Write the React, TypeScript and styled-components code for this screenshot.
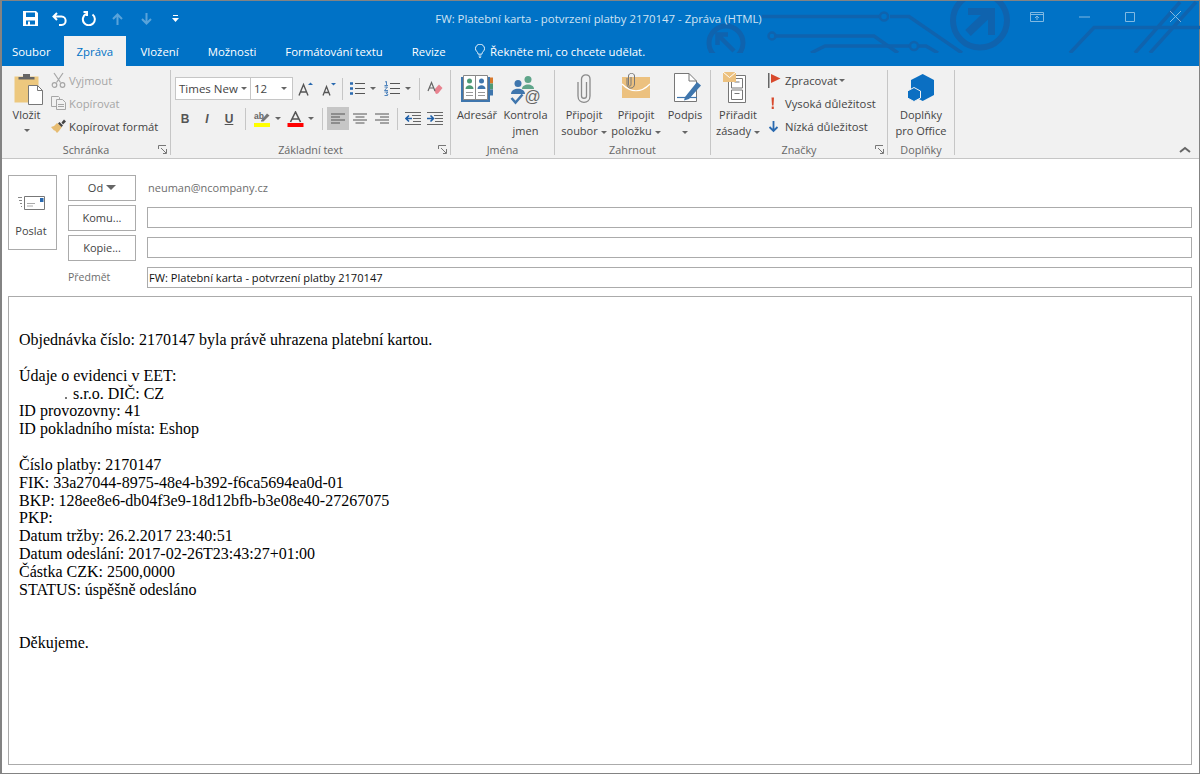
import styled, { createGlobalStyle } from "styled-components";
import { ReactNode } from "react";

const GlobalStyle = createGlobalStyle`
  html, body {
    margin: 0;
    padding: 0;
    background: #fff;
    overflow: hidden;
  }
  * { box-sizing: border-box; }
`;

const uiFont = `"Open Sans", "Noto Sans", sans-serif`;

const Window = styled.div`
  width: 1200px;
  height: 774px;
  display: flex;
  flex-direction: column;
  border: 1px solid #838383;
  border-left-width: 2px;
  background: #fff;
  font-family: ${uiFont};
  font-size: 11px;
  color: #444;
`;

const Header = styled.header`
  position: relative;
  background: #0072c6;
  height: 65px;
  flex: none;
  color: #fff;
`;

const Art = styled.svg`
  position: absolute;
  left: 0;
  top: 0;
  pointer-events: none;
`;

const TitleRow = styled.div`
  position: relative;
  height: 35px;
  display: grid;
  grid-template-columns: 1fr auto 1fr;
  align-items: center;
`;

const Qat = styled.div`
  display: flex;
  align-items: center;
  gap: 11px;
  padding-left: 19px;
`;

const QatBtn = styled.span<{ $dim?: boolean }>`
  display: flex;
  width: 18px;
  height: 18px;
  align-items: center;
  justify-content: center;
  opacity: ${(p) => (p.$dim ? 0.35 : 1)};
`;

const Title = styled.div`
  font-size: 11.4px;
  color: #cfe3f3;
  padding-right: 4px;
`;

const WinControls = styled.div`
  display: flex;
  justify-content: flex-end;
  align-items: center;
  gap: 35px;
  padding: 0 18px 4px 0;
  opacity: 0.5;
`;

const Tabs = styled.nav`
  position: relative;
  display: flex;
  height: 30px;
  align-items: stretch;
`;

const Tab = styled.div<{ $active?: boolean }>`
  display: flex;
  align-items: center;
  padding: 0 ${(p) => (p.$active ? "13px" : "14.5px")};
  font-size: 11.4px;
  background: ${(p) => (p.$active ? "#f1f1f1" : "transparent")};
  color: ${(p) => (p.$active ? "#0072c6" : "#fff")};
  &:first-child {
    padding: 0 13px 0 10px;
  }
`;

const TellMe = styled.div`
  display: flex;
  align-items: center;
  gap: 5px;
  padding-left: 15px;
  font-size: 11.4px;
`;

const Ribbon = styled.section`
  position: relative;
  display: flex;
  flex: none;
  height: 93px;
  background: #f1f1f1;
  border-bottom: 1px solid #c6c6c6;
  padding: 4px 0 3px;
`;

const Group = styled.div<{ $w: number }>`
  position: relative;
  width: ${(p) => p.$w}px;
  flex: none;
  display: flex;
  flex-direction: column;
  border-right: 1px solid #c6c6c6;
`;

const GroupBody = styled.div`
  flex: 1;
  display: flex;
  min-height: 0;
`;

const GroupLabel = styled.div`
  height: 12px;
  line-height: 14px;
  text-align: center;
  font-size: 10.8px;
  color: #666;
`;

const Launcher = styled.svg`
  position: absolute;
  right: 3px;
  bottom: 1px;
`;

const BigButton = styled.div<{ $w: number }>`
  width: ${(p) => p.$w}px;
  flex: none;
  display: flex;
  flex-direction: column;
  align-items: center;
  font-size: 11px;
  line-height: 16px;
  text-align: center;
  color: #444;
  white-space: nowrap;
`;

const BigIcon = styled.div`
  height: 36px;
  margin-bottom: 1px;
  display: flex;
  align-items: flex-end;
  justify-content: center;
`;

const SmallCol = styled.div<{ $pl?: number; $gap?: number }>`
  display: flex;
  flex-direction: column;
  gap: 3px;
  padding-left: ${(p) => p.$pl ?? 0}px;
  & > div {
    gap: ${(p) => p.$gap ?? 3}px;
  }
`;

const SmallBtn = styled.div<{ $off?: boolean }>`
  display: flex;
  align-items: center;
  height: 20px;
  font-size: 11.25px;
  white-space: nowrap;
  color: ${(p) => (p.$off ? "#a6a6a6" : "#444")};
`;

const Caret = styled.span<{ $ml?: number; $big?: boolean; $block?: boolean }>`
  display: ${(p) => (p.$block ? "block" : "inline-block")};
  flex: none;
  width: 0;
  height: 0;
  margin-left: ${(p) => p.$ml ?? 3}px;
  margin-top: ${(p) => (p.$block ? "6px" : "0")};
  vertical-align: middle;
  border-left: ${(p) => (p.$big ? 5.5 : 3)}px solid transparent;
  border-right: ${(p) => (p.$big ? 5.5 : 3)}px solid transparent;
  border-top: ${(p) => (p.$big ? 5 : 3)}px solid #666;
`;

const FontRows = styled.div`
  display: flex;
  flex-direction: column;
  gap: 7px;
  padding: 7px 0 0 4px;
`;

const FontRow = styled.div<{ $ml?: number }>`
  display: flex;
  align-items: center;
  height: 23px;
  margin-left: ${(p) => p.$ml ?? 0}px;
`;

const Combo = styled.div<{ $w: number }>`
  width: ${(p) => p.$w}px;
  height: 23px;
  display: flex;
  align-items: center;
  justify-content: space-between;
  padding: 0 5px 0 3px;
  background: #fff;
  border: 1px solid #c6c6c6;
  margin-right: -1px;
  font-size: 11.5px;
  overflow: hidden;
  white-space: nowrap;
`;

const FmtBtn = styled.div<{ $w?: number; $on?: boolean; $ml?: number }>`
  width: ${(p) => p.$w ?? 22}px;
  height: 23px;
  flex: none;
  margin-left: ${(p) => p.$ml ?? 0}px;
  display: flex;
  align-items: center;
  justify-content: center;
  background: ${(p) => (p.$on ? "#c6c6c6" : "transparent")};
`;

const FmtLetter = styled.span<{ $i?: boolean; $u?: boolean }>`
  font-family: "Liberation Sans", sans-serif;
  font-size: 12px;
  font-weight: 700;
  font-style: ${(p) => (p.$i ? "italic" : "normal")};
  text-decoration: ${(p) => (p.$u ? "underline" : "none")};
  color: #555;
`;

const VSep = styled.span<{ $l?: number }>`
  width: 1px;
  height: 22px;
  flex: none;
  margin: 0 4px 0 ${(p) => p.$l ?? 4}px;
  background: #c6c6c6;
`;

const Collapse = styled.svg`
  position: absolute;
  right: 8px;
  bottom: 5px;
`;

const Compose = styled.main`
  flex: 1;
  min-height: 0;
  display: flex;
  flex-direction: column;
  padding: 16px 7px 8px 6px;
`;

const Fields = styled.div`
  display: flex;
  align-items: stretch;
`;

const SendButton = styled.div`
  width: 49px;
  height: 75px;
  flex: none;
  display: flex;
  flex-direction: column;
  align-items: center;
  gap: 12px;
  padding: 20px 3px 0 0;
  margin-right: 11px;
  border: 1px solid #ababab;
  font-size: 11px;
  color: #444;
`;

const FieldRows = styled.div`
  flex: 1;
  display: grid;
  grid-template-columns: 68px 1fr;
  grid-auto-rows: 26px;
  column-gap: 11px;
  row-gap: 4px;
`;

const FieldBtn = styled.div`
  display: flex;
  align-items: center;
  justify-content: center;
  padding-bottom: 2px;
  border: 1px solid #ababab;
  font-size: 11px;
  color: #444;
`;

const SenderText = styled.div`
  display: flex;
  align-items: center;
  padding: 0 0 2px 1px;
  font-size: 11px;
  color: #6d6d6d;
`;

const FieldInput = styled.div`
  align-self: start;
  margin-top: 2px;
  height: 21px;
  display: flex;
  align-items: center;
  padding: 0 0 1px 1px;
  border: 1px solid #ababab;
  font-size: 11.1px;
  color: #111;
`;

const SubjectLabel = styled.div`
  display: flex;
  align-items: center;
  padding-bottom: 3px;
  font-size: 10.5px;
  color: #6d6d6d;
`;

const Body = styled.div`
  flex: 1;
  margin-top: 5px;
  padding: 34px 10px 0;
  border: 1px solid #ababab;
  font-family: "Liberation Serif", "Times New Roman", serif;
  font-size: 16px;
  line-height: 17.85px;
  color: #000;
  white-space: pre;
`;

/* blacked-out company name: only a speck of the last letter is left */
const Redact = styled.span`
  display: inline-block;
  width: 54px;
  height: 12px;
  background: linear-gradient(#777, #777) no-repeat 46px 10px / 2px 2px;
`;

function Big({ w, icon, children }: { w: number; icon: ReactNode; children: ReactNode }) {
  return (
    <BigButton $w={w}>
      <BigIcon>{icon}</BigIcon>
      {children}
    </BigButton>
  );
}

function RibbonGroup({ w, label, launcher, children }: { w: number; label: string; launcher?: boolean; children: ReactNode }) {
  return (
    <Group $w={w}>
      <GroupBody>{children}</GroupBody>
      <GroupLabel>{label}</GroupLabel>
      {launcher && (
        <Launcher width="9" height="9" viewBox="0 0 9 9" fill="none" stroke="#777">
          <path d="M.5 4V.5H8M8.5 8.5V4M3 3l5 5M5 8.5h3.5" />
        </Launcher>
      )}
    </Group>
  );
}

const IndentIcon = ({ flip }: { flip?: boolean }) => (
  <svg width="16" height="13" viewBox="0 0 16 13" fill="none">
    <path d="M7 3.500h9M8 6.500h8M8 9.500h8" stroke="#666" />
    <path d="M0 .5h16M0 12.500h16" stroke="#666" />
    <path d={flip ? "M0 6.500h6M3.500 3.500l3 3-3 3" : "M1 6.500h6M4 3.500l-3 3 3 3"} stroke="#1e5fa8" strokeWidth="1.600" />
  </svg>
);

const AlignLines = ({ kind }: { kind: "l" | "c" | "r" }) => {
  const d =
    kind === "l"
      ? "M1 2h14M1 5h9M1 8h14M1 11h9"
      : kind === "c"
      ? "M1 2h14M3.500 5h9M1 8h14M3.500 11h9"
      : "M1 2h14M6 5h9M1 8h14M6 11h9";
  return (
    <svg width="16" height="13" viewBox="0 0 16 13" stroke="#555" fill="none">
      <path d={d} />
    </svg>
  );
};

export default function App() {
  return (
    <>
      <GlobalStyle />
      <Window>
        <Header>
          <Art width="1198" height="52" viewBox="0 0 1198 52" fill="none" stroke="#0f63ae">
            <g strokeWidth="3.500">
              <circle cx="724" cy="42" r="17" strokeWidth="5" />
              <path d="M732 50L716 34M715.500 44V33.500H726" strokeWidth="4.500" />
              <circle cx="770" cy="35" r="3.500" strokeWidth="2.500" />
              <path d="M774 35H872L896 52" />
              <path d="M760 15.500H878M888 15.500H907L960 52" />
              <circle cx="882" cy="15.500" r="4" strokeWidth="2.500" />
              <path d="M809 52L823 45H907M917 45H924L936 52" />
              <circle cx="912" cy="45" r="4" strokeWidth="2.500" />
              <circle cx="978" cy="19.500" r="27" strokeWidth="6" />
              <path d="M966 32L989 10" strokeWidth="8" />
              <path d="M966 10.500H989.500V34" strokeWidth="7" />
              <path d="M1068 52L1092 26.500H1198M1133 52L1178 1M1148 52L1194 1" />
            </g>
          </Art>
          <TitleRow>
            <Qat>
              <QatBtn>
                <svg width="15" height="15" viewBox="0 0 15 15" fill="#fff">
                  <path fillRule="evenodd" d="M0 0H13L15 2V15H0ZM3 1.500V6H12V1.500ZM3 9.500V13.500H5V10.500H7V13.500H12V9.500Z" />
                </svg>
              </QatBtn>
              <QatBtn>
                <svg width="15" height="14" viewBox="0 0 15 14" fill="none" stroke="#fff" strokeWidth="2">
                  <path d="M5 1L1.500 4.500 5 8M2 4.500H9.500C15 4.500 15 13 9.500 13H7" />
                </svg>
              </QatBtn>
              <QatBtn>
                <svg width="15" height="15" viewBox="0 0 15 15" fill="none" stroke="#fff" strokeWidth="2">
                  <path d="M5 3A6 6 0 1 0 11.500 3.500M2.500 1H6V5" />
                </svg>
              </QatBtn>
              <QatBtn $dim>
                <svg width="11" height="12" viewBox="0 0 11 12" fill="none" stroke="#fff" strokeWidth="2">
                  <path d="M5.500 12V2M1 6l4.500-4.500L10 6" />
                </svg>
              </QatBtn>
              <QatBtn $dim>
                <svg width="11" height="12" viewBox="0 0 11 12" fill="none" stroke="#fff" strokeWidth="2">
                  <path d="M5.500 0V10M1 6l4.500 4.500L10 6" />
                </svg>
              </QatBtn>
              <QatBtn>
                <svg width="7" height="7" viewBox="0 0 7 7" fill="#fff">
                  <path d="M1 0H6V1H1ZM0 3H7L3.500 7Z" />
                </svg>
              </QatBtn>
            </Qat>
            <Title>FW: Platební karta - potvrzení platby 2170147 - Zpráva (HTML)</Title>
            <WinControls>
              <svg width="14" height="10" viewBox="0 0 14 10" fill="none" stroke="#fff">
                <path d="M.5.500h13v9H.5zM.5 2.500h13M7 8V4M5 6l2-2 2 2" />
              </svg>
              <svg width="11" height="2" viewBox="0 0 11 2" stroke="#fff">
                <path d="M0 1h11" />
              </svg>
              <svg width="10" height="10" viewBox="0 0 10 10" fill="none" stroke="#fff">
                <path d="M.5.500h9v9h-9z" />
              </svg>
              <svg width="11" height="11" viewBox="0 0 11 11" fill="none" stroke="#fff">
                <path d="M0 0l11 11M11 0L0 11" />
              </svg>
            </WinControls>
          </TitleRow>
          <Tabs>
            <Tab>Soubor</Tab>
            <Tab $active>Zpráva</Tab>
            <Tab>Vložení</Tab>
            <Tab>Možnosti</Tab>
            <Tab>Formátování textu</Tab>
            <Tab>Revize</Tab>
            <TellMe>
              <svg width="10" height="14" viewBox="0 0 11 15" fill="none" stroke="#fff">
                <path d="M3.500 11C3 8 .5 7.500.5 5a5 5 0 0 1 10 0C10.500 7.500 8 8 7.500 11ZM4 13h3M4.500 14.500h2" />
              </svg>
              Řekněte mi, co chcete udělat.
            </TellMe>
          </Tabs>
        </Header>

        <Ribbon>
          <RibbonGroup w={169} label="Schránka" launcher>
            <Big
              w={49}
              icon={
                <svg width="32" height="32" viewBox="0 0 32 32">
                  <path d="M3.500 2.500H27.500V28.500H3.500Z" fill="#edc87e" />
                  <path d="M7.500 3h16v2.500h-16z" fill="#666" />
                  <path d="M12 0h7v4h-7z" fill="#666" />
                  <path d="M17.500 11.500H26.500L31.500 16.500V30.500H17.500Z" fill="#fff" stroke="#777" />
                  <path d="M26.500 11.500V16.500H31.500" fill="none" stroke="#777" />
                </svg>
              }
            >
              Vložit
              <Caret $ml={0} $block />
            </Big>
            <SmallCol>
              <SmallBtn $off>
                <svg width="15" height="16" viewBox="0 0 15 16" fill="none" stroke="#a6a6a6" strokeWidth="1.200">
                  <path d="M3 1l6.500 9.500M12 1L5.500 10.500" />
                  <circle cx="3.500" cy="13" r="2.300" />
                  <circle cx="11.500" cy="13" r="2.300" />
                </svg>
                Vyjmout
              </SmallBtn>
              <SmallBtn $off>
                <svg width="15" height="14" viewBox="0 0 15 14" fill="#f1f1f1" stroke="#a6a6a6">
                  <path d="M.5.500h7l1 1v9h-8z" />
                  <path d="M5.500 3.500h6l3 3v7h-9z" />
                  <path d="M7 8.500h6M7 10.500h6" />
                </svg>
                Kopírovat
              </SmallBtn>
              <SmallBtn>
                <svg width="15" height="15" viewBox="0 0 15 15">
                  <path d="M0 8L3 7 6 4 11 8 8 12 6 14 4 11.500 3 11.500 Z" fill="#e6bc72" />
                  <path d="M7 4.500L8.500 3 12 6.500 10.500 8Z" fill="#444" />
                  <path d="M10.500 3.500L13 0.500 15 2.500 12 5.500Z" fill="#444" />
                </svg>
                Kopírovat formát
              </SmallBtn>
            </SmallCol>
          </RibbonGroup>

          <RibbonGroup w={280} label="Základní text" launcher>
            <FontRows>
              <FontRow>
                <Combo $w={76}>
                  Times New
                  <Caret />
                </Combo>
                <Combo $w={43}>
                  12
                  <Caret />
                </Combo>
                <FmtBtn $w={24} $ml={2}>
                  <svg width="16" height="14" viewBox="0 0 16 14" fill="none" stroke="#555" strokeWidth="1.400">
                    <path d="M1 13.500L5.500 2.500 10 13.500M2.500 10h6" />
                    <path d="M10 3l2.500-2.500L15 3H10Z" fill="#2a6ab0" stroke="none" />
                  </svg>
                </FmtBtn>
                <FmtBtn>
                  <svg width="15" height="14" viewBox="0 0 15 14" fill="none" stroke="#555" strokeWidth="1.300">
                    <path d="M1 13.500L4.500 4.500 8 13.500M2 10.500h5" />
                    <path d="M9 1h5L11.500 3.500Z" fill="#2a6ab0" stroke="none" />
                  </svg>
                </FmtBtn>
                <VSep $l={2} />
                <FmtBtn $w={20}>
                  <svg width="15" height="15" viewBox="0 0 15 15" fill="none" stroke="#555">
                    <path d="M5 2.500h10M5 7.500h10M5 12.500h10" />
                    <path d="M0 2.500h3M0 7.500h3M0 12.500h3" stroke="#2a6ab0" strokeWidth="2.500" />
                  </svg>
                </FmtBtn>
                <Caret />
                <FmtBtn $w={20} $ml={6}>
                  <svg width="16" height="15" viewBox="0 0 16 15" fill="none" stroke="#555">
                    <path d="M6 2.500h10M6 7.500h10M6 12.500h10" />
                    <path d="M1 1l1.500-.5V4M.5 4.500h3.500M.5 6h3L.5 9.500h3.500M.5 11h3.500L2 12.500l2 1-.5 1H.5" stroke="#2a6ab0" strokeWidth=".8" />
                  </svg>
                </FmtBtn>
                <Caret />
                <VSep $l={8} />
                <FmtBtn>
                  <svg width="16" height="15" viewBox="0 0 16 15">
                    <path d="M7 9L12 3.500 15.500 7 11 12.500 9 13Z" fill="#e8828f" />
                    <path d="M1 10L4.500 1.500 8 10M2.200 7h4.500" fill="none" stroke="#666" strokeWidth="1.200" />
                  </svg>
                </FmtBtn>
              </FontRow>
              <FontRow $ml={-1}>
                <FmtBtn>
                  <FmtLetter>B</FmtLetter>
                </FmtBtn>
                <FmtBtn>
                  <FmtLetter $i>I</FmtLetter>
                </FmtBtn>
                <FmtBtn>
                  <FmtLetter $u>U</FmtLetter>
                </FmtBtn>
                <VSep $l={5} />
                <FmtBtn>
                  <svg width="17" height="16" viewBox="0 0 17 16">
                    <path d="M1 16h16v-4H1z" fill="#ffff00" />
                    <path d="M8 9.500L14 2.500l2.500 2-6 6H8z" fill="#777" />
                    <text x="1" y="8" fontSize="8.500" fontWeight="700" fontFamily="Liberation Sans" fill="#666">ab</text>
                  </svg>
                </FmtBtn>
                <Caret />
                <FmtBtn $w={20} $ml={4}>
                  <svg width="17" height="16" viewBox="0 0 17 16">
                    <path d="M.5 16h16v-4H.5z" fill="#f00" />
                    <path d="M3.500 11L8.500 1 13.500 11M5 8h7" fill="none" stroke="#555" strokeWidth="1.600" />
                  </svg>
                </FmtBtn>
                <Caret />
                <VSep $l={8} />
                <FmtBtn $on>
                  <AlignLines kind="l" />
                </FmtBtn>
                <FmtBtn>
                  <AlignLines kind="c" />
                </FmtBtn>
                <FmtBtn>
                  <AlignLines kind="r" />
                </FmtBtn>
                <VSep />
                <FmtBtn>
                  <IndentIcon />
                </FmtBtn>
                <FmtBtn>
                  <IndentIcon flip />
                </FmtBtn>
              </FontRow>
            </FontRows>
          </RibbonGroup>

          <RibbonGroup w={104} label="Jména">
            <Big
              w={52}
              icon={
                <svg width="32" height="31" viewBox="0 0 32 31" fill="none">
                  <path d="M0 2H29V27H0Z" fill="#3f76ad" />
                  <path d="M29 2.500h3v6h-3z" fill="#d8792c" />
                  <path d="M29 8.500h3v6h-3z" fill="#4d9a76" />
                  <path d="M29 14.500h3v6h-3z" fill="#3f76ad" />
                  <path d="M2.500 .5H14.500V24.500H2.500ZM14.500 .5H26.500V24.500H14.500Z" fill="#fff" stroke="#888" />
                  <circle cx="8.500" cy="6" r="2.500" fill="#4d9a76" />
                  <path d="M4.500 14c0-5 8-5 8 0Z" fill="#4d9a76" />
                  <circle cx="20.500" cy="6" r="2.500" fill="#3f76ad" />
                  <path d="M16.500 14c0-5 8-5 8 0Z" fill="#3f76ad" />
                  <path d="M5 17.500h7M5 20.500h7M17 17.500h7M17 20.500h7" stroke="#999" />
                </svg>
              }
            >
              Adresář
            </Big>
            <Big
              w={45}
              icon={
                <svg width="33" height="32" viewBox="0 0 33 32" fill="none">
                  <circle cx="19" cy="5.500" r="3.500" fill="#5fa58a" />
                  <path d="M13 15c0-6 12-6 12 0Z" fill="#5fa58a" />
                  <circle cx="9" cy="9.500" r="3.500" fill="#3f76ad" />
                  <path d="M2 20c0-7 14-7 14 0Z" fill="#3f76ad" />
                  <path d="M2.500 24l4 4.500 7-8" stroke="#3f76ad" strokeWidth="2.500" />
                  <text x="15.500" y="28" fontSize="16" fontFamily="Liberation Sans" fill="#666">@</text>
                </svg>
              }
            >
              <span>
                Kontrola
                <br />
                jmen
              </span>
            </Big>
          </RibbonGroup>

          <RibbonGroup w={156} label="Zahrnout">
            <Big
              w={58}
              icon={
                <svg width="14" height="32" viewBox="0 0 14 32" fill="none" stroke="#8a8a8a" strokeWidth="1.300">
                  <path d="M9.500 8V22C9.500 25 4.500 25 4.500 22V5C4.500 -.5 13 -.5 13 5V22C13 30.500 1 30.500 1 22V8" />
                </svg>
              }
            >
              <span>
                Připojit
                <br />
                soubor
                <Caret />
              </span>
            </Big>
            <Big
              w={46}
              icon={
                <svg width="30" height="33" viewBox="0 0 30 33" fill="none">
                  <path d="M1 4H29V25H1Z" fill="#ecc17f" />
                  <path d="M1 11C10 20 20 20 29 11" stroke="#fff" strokeWidth="1.200" />
                  <path d="M10 4V11C10 14 7.500 14 7.500 11V3C7.500 -.5 13.500 -.5 13.500 3V11C13.500 16.500 6 16.500 6 11V5" stroke="#777" />
                </svg>
              }
            >
              <span>
                Připojit
                <br />
                položku
                <Caret />
              </span>
            </Big>
            <Big
              w={52}
              icon={
                <svg width="34" height="33" viewBox="0 0 34 33" fill="none">
                  <path d="M6.500 .5H21L28.500 8V28.500H6.500Z" fill="#fff" stroke="#777" />
                  <path d="M21 .5V8H28.500" stroke="#777" />
                  <path d="M17 24L29 9 33 12.500 21 26 16 27.500Z" fill="#3f76ad" />
                  <path d="M9 24.500H29" stroke="#3f76ad" strokeWidth="1.200" />
                </svg>
              }
            >
              <span>
                Podpis
                <br />
                <Caret $ml={0} />
              </span>
            </Big>
          </RibbonGroup>

          <RibbonGroup w={177} label="Značky" launcher>
            <Big
              w={54}
              icon={
                <svg width="30" height="34" viewBox="0 0 30 34" fill="none">
                  <path d="M5.500 3.500H22.500V30.500H5.500Z" fill="#fff" stroke="#777" />
                  <path d="M8.500 6.500H19.500V16H8.500ZM8.500 18H19.500V27.500H8.500ZM11.500 10H16.500M11.500 21.500H16.500" stroke="#777" />
                  <path d="M0 0H13V10H0Z" fill="#ecc17f" />
                  <path d="M0 0L6.500 5.500 13 0" stroke="#fff" />
                </svg>
              }
            >
              <span>
                Přiřadit
                <br />
                zásady
                <Caret />
              </span>
            </Big>
            <SmallCol $pl={3} $gap={4}>
              <SmallBtn>
                <svg width="13" height="15" viewBox="0 0 13 15">
                  <path d="M0 0H1.500V15H0Z" fill="#666" />
                  <path d="M3 1L12.500 5.500 3 10Z" fill="#d8492c" />
                </svg>
                Zpracovat
                <Caret $ml={-2} />
              </SmallBtn>
              <SmallBtn>
                <svg width="13" height="14" viewBox="0 0 13 14" fill="#d8492c">
                  <path d="M3.500 1.500H6L5.500 9.500H4ZM3.700 10.500H5.800V13H3.700Z" />
                </svg>
                Vysoká důležitost
              </SmallBtn>
              <SmallBtn>
                <svg width="13" height="14" viewBox="0 0 13 14" fill="none" stroke="#2a6ab0" strokeWidth="1.800">
                  <path d="M5.500 2V12M1.500 8l4 4 4-4" />
                </svg>
                Nízká důležitost
              </SmallBtn>
            </SmallCol>
          </RibbonGroup>

          <RibbonGroup w={67} label="Doplňky">
            <Big
              w={66}
              icon={
                <svg width="26" height="32" viewBox="0 0 26 32">
                  <path d="M14.700 0L26 6V21L14.700 27L3 21V6Z" fill="#0b6fc2" />
                  <path d="M6 13.500L12.500 17V24L6 27.500L-.5 24V17Z" fill="#0b6fc2" stroke="#f1f1f1" />
                </svg>
              }
            >
              <span>
                Doplňky
                <br />
                pro Office
              </span>
            </Big>
          </RibbonGroup>

          <Collapse width="12" height="7" viewBox="0 0 12 7" fill="none" stroke="#666" strokeWidth="2">
            <path d="M1 6L6 2l5 4" />
          </Collapse>
        </Ribbon>

        <Compose>
          <Fields>
            <SendButton>
              <svg width="27" height="15" viewBox="0 0 27 15" fill="none">
                <path d="M6.500 .5H26.500V13.500H6.500Z" fill="#fff" stroke="#777" />
                <path d="M0 1.500h4M1 4.500h3M2 7.500h2M3 10.500h1" stroke="#888" />
                <path d="M22 2h3.500v4H22z" fill="#2a6ab0" />
                <path d="M9 7.500h8M9 10h6" stroke="#aaa" />
              </svg>
              Poslat
            </SendButton>
            <FieldRows>
              <FieldBtn>
                Od
                <Caret $big />
              </FieldBtn>
              <SenderText>neuman@ncompany.cz</SenderText>
              <FieldBtn>Komu...</FieldBtn>
              <FieldInput />
              <FieldBtn>Kopie...</FieldBtn>
              <FieldInput />
              <SubjectLabel>Předmět</SubjectLabel>
              <FieldInput>FW: Platební karta - potvrzení platby 2170147</FieldInput>
            </FieldRows>
          </Fields>
          <Body>
            {`Objednávka číslo: 2170147 byla právě uhrazena platební kartou.

Údaje o evidenci v EET:
`}
            <Redact />
            {`s.r.o. DIČ: CZ
ID provozovny: 41
ID pokladního místa: Eshop

Číslo platby: 2170147
FIK: 33a27044-8975-48e4-b392-f6ca5694ea0d-01
BKP: 128ee8e6-db04f3e9-18d12bfb-b3e08e40-27267075
PKP:
Datum tržby: 26.2.2017 23:40:51
Datum odeslání: 2017-02-26T23:43:27+01:00
Částka CZK: 2500,0000
STATUS: úspěšně odesláno


Děkujeme.`}
          </Body>
        </Compose>
      </Window>
    </>
  );
}
